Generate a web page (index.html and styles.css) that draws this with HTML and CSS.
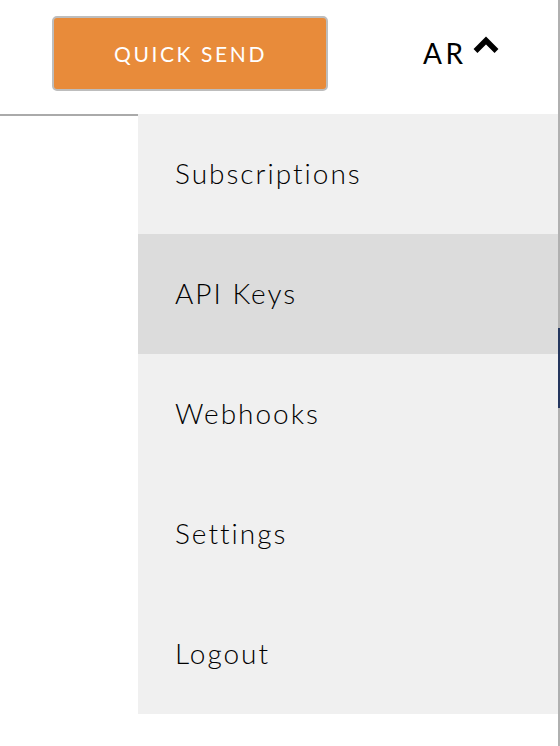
FILE: index.html
```html
<!DOCTYPE html>
<html lang="en">
<head>
<meta charset="utf-8">
<link rel="stylesheet" href="styles.css">
</head>
<body>
<div class="page">
  <div class="main">
    <header class="topbar">
      <button class="quick-send">QUICK SEND</button>
      <div class="user">
        <span class="initials">AR</span>
        <svg class="chevron" width="26" height="18" viewBox="0 0 26 18"><path d="M2.5 15 L13 4.5 L23.5 15" fill="none" stroke="#000" stroke-width="5.5" stroke-linejoin="miter"/></svg>
      </div>
    </header>
    <nav class="dropdown">
      <a class="item">Subscriptions</a>
      <a class="item active">API Keys</a>
      <a class="item">Webhooks</a>
      <a class="item">Settings</a>
      <a class="item">Logout</a>
    </nav>
  </div>
  <div class="edge"><div class="thumb"></div></div>
</div>
</body>
</html>
```
FILE: styles.css
```css
html, body {
  margin: 0;
  padding: 0;
  background: #fff;
}
body {
  font-family: "Lato", "Noto Sans", sans-serif;
  color: #111;
}
.page {
  display: grid;
  grid-template-columns: 1fr 2px;
  height: 746px;
  overflow: hidden;
}
.main {
  position: relative;
}
.topbar {
  height: 114px;
  border-bottom: 2px solid #aaaaaa;
  display: flex;
  align-items: flex-start;
  padding-left: 52px;
  box-sizing: content-box;
}
.quick-send {
  margin-top: 16px;
  width: 276px;
  height: 75px;
  background: #e88b3a;
  border: 2px solid #bdbdbd;
  border-radius: 5px;
  color: #fff;
  font-family: "Lato", "Noto Sans", sans-serif;
  font-size: 21px;
  font-weight: 400;
  letter-spacing: 2.6px;
  padding: 0 0 0 1px;
}
.user {
  margin-left: 95px;
  margin-top: 36px;
  display: flex;
  align-items: flex-start;
  gap: 6px;
}
.initials {
  font-size: 28px;
  letter-spacing: 3.5px;
  line-height: 34px;
  color: #000;
}
.chevron {
  display: block;
}
.dropdown {
  position: absolute;
  top: 114px;
  left: 138px;
  width: 420px;
  display: flex;
  flex-direction: column;
}
.item {
  height: 120px;
  background: #f0f0f0;
  display: flex;
  align-items: center;
  padding-left: 37px;
  font-size: 28px;
  font-weight: 300;
  letter-spacing: 2px;
  color: #000;
  padding-bottom: 2px;
  box-sizing: border-box;
}
.item.active {
  background: #dcdcdc;
}
.edge {
  background: #b0b0b0;
  padding-top: 328px;
}
.thumb {
  height: 80px;
  background: #24365e;
}
```
